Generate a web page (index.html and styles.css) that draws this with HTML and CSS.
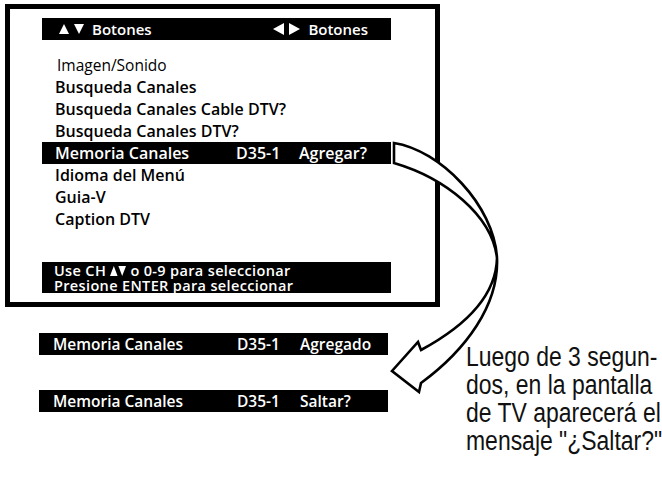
FILE: index.html
```html
<!DOCTYPE html>
<html lang="es">
<head>
<meta charset="utf-8">
<title>Memoria Canales</title>
<link rel="stylesheet" href="styles.css">
</head>
<body>
<div class="page">
  <div class="left">
    <div class="screen">
      <div class="hdr">
        <span class="hl"><svg class="tri" width="26" height="12" viewBox="0 0 26 12"><polygon points="0,11 5,1 10,11"/><polygon points="15,1 25,1 20,11"/></svg>Botones</span>
        <span class="hr"><svg class="tri" width="28" height="12" viewBox="0 0 28 12"><polygon points="0,6 11,0 11,12"/><polygon points="16,0 27,6 16,12"/></svg>Botones</span>
      </div>
      <ul class="menu">
        <li class="light">Imagen/Sonido</li>
        <li>Busqueda Canales</li>
        <li>Busqueda Canales Cable DTV?</li>
        <li>Busqueda Canales DTV?</li>
        <li class="sel"><span class="c1">Memoria Canales</span><span class="c2">D35-1</span><span>Agregar?</span></li>
        <li>Idioma del Menú</li>
        <li>Guia-V</li>
        <li>Caption DTV</li>
      </ul>
      <div class="help">
        <div>Use CH <svg class="mini" width="16" height="10" viewBox="0 0 16 10"><polygon points="0,10 3.8,0 7.6,10"/><polygon points="8.4,0 16,0 12.2,10"/></svg> o 0-9 para seleccionar</div>
        <div>Presione ENTER para seleccionar</div>
      </div>
    </div>
    <div class="bar first"><span class="c1">Memoria Canales</span><span class="c2">D35-1</span><span>Agregado</span></div>
    <div class="bar second"><span class="c1">Memoria Canales</span><span class="c2">D35-1</span><span>Saltar?</span></div>
  </div>
  <p class="note">Luego de 3 segun-<br>dos, en la pantalla<br>de TV aparecerá el<br>mensaje "¿Saltar?"</p>
</div>
<svg class="arrow" width="662" height="478" viewBox="0 0 662 478">
  <path d="M394,143 C440,150 494,205 497,258 C499,305 466,350 421,383 L419,392 L392,371 L418,342 L421,350 C458,330 496,300 497,258 C492,215 445,178 394,163 Z" fill="#fff" stroke="#000" stroke-width="2.6" stroke-linejoin="miter"/>
</svg>
</body>
</html>
```
FILE: styles.css
```css
html, body {
  margin: 0;
  padding: 0;
  background: #fff;
}
body {
  width: 662px;
  height: 478px;
  position: relative;
  overflow: hidden;
  font-family: "Open Sans", "Noto Sans", sans-serif;
  color: #000;
}
.page {
  display: flex;
  align-items: flex-start;
}
.left {
  display: flex;
  flex-direction: column;
  flex: none;
  margin-left: 5px;
  margin-top: 4px;
  width: 435px;
}
.screen {
  box-sizing: border-box;
  width: 435px;
  height: 303px;
  border: 5px solid #000;
  padding: 9px 44px 9px 32px;
  display: flex;
  flex-direction: column;
}
.hdr {
  height: 22px;
  background: #000;
  color: #fff;
  display: flex;
  justify-content: space-between;
  align-items: center;
  padding: 0 23px 0 17px;
  font-size: 15px;
  font-weight: 600;
}
.hdr span {
  display: flex;
  align-items: center;
}
.tri {
  fill: #fff;
  margin-right: 7px;
}
.menu {
  list-style: none;
  margin: 14px 0 0;
  padding: 0;
}
.menu li {
  height: 22px;
  line-height: 22px;
  padding-left: 13px;
  font-size: 16px;
  font-weight: 600;
  white-space: nowrap;
}
.menu li.light {
  font-weight: 400;
  font-size: 15.5px;
  padding-left: 15px;
}
.menu li.sel,
.bar {
  background: #000;
  color: #fff;
  display: flex;
}
.c1 {
  width: 181px;
}
.c2 {
  width: 63px;
}
.help {
  margin-top: 32px;
  height: 31px;
  background: #000;
  color: #fff;
  box-sizing: border-box;
  padding: 0.5px 0 0 12px;
  font-size: 14.5px;
  font-weight: 600;
  line-height: 15px;
  letter-spacing: 0.35px;
  white-space: nowrap;
}
.mini {
  fill: #fff;
  vertical-align: 0;
}
.bar {
  width: 349px;
  height: 22px;
  line-height: 22px;
  margin-left: 34px;
  box-sizing: border-box;
  padding-left: 14px;
  font-size: 15.5px;
  font-weight: 600;
}
.bar.first {
  margin-top: 26px;
}
.bar.second {
  margin-top: 35px;
}
.bar .c1 {
  width: 184px;
}
.note {
  margin: 343px 0 0 26px;
  font-family: "Liberation Sans", Arial, sans-serif;
  font-size: 27px;
  line-height: 28px;
  color: #111;
  white-space: nowrap;
  transform: scaleX(0.85);
  transform-origin: 0 0;
}
.arrow {
  position: absolute;
  left: 0;
  top: 0;
  pointer-events: none;
}
```
